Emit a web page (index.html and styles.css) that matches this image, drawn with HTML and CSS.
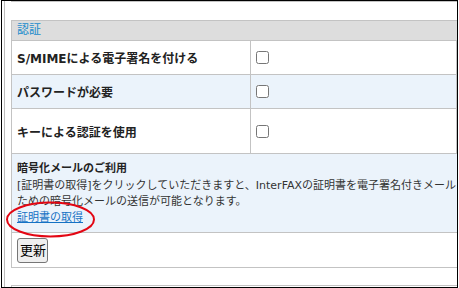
FILE: index.html
```html
<!DOCTYPE html>
<html lang="ja">
<head>
<meta charset="utf-8">
<link rel="stylesheet" href="styles.css">
</head>
<body>
<div class="frame">
  <div class="inner">
    <div class="panel-prev"></div>
    <div class="panel">
      <div class="head">認証</div>
      <div class="row">
        <div class="label">S/MIMEによる電子署名を付ける</div>
        <div class="ctrl"><input type="checkbox"></div>
        <div class="extra"></div>
      </div>
      <div class="row alt">
        <div class="label">パスワードが必要</div>
        <div class="ctrl"><input type="checkbox"></div>
        <div class="extra"></div>
      </div>
      <div class="row tall">
        <div class="label">キーによる認証を使用</div>
        <div class="ctrl"><input type="checkbox"></div>
        <div class="extra"></div>
      </div>
      <div class="info">
        <div class="info-title">暗号化メールのご利用</div>
        <div class="info-text">[証明書の取得]をクリックしていただきますと、InterFAXの証明書を電子署名付きメール<br>ための暗号化メールの送信が可能となります。</div>
        <a class="info-link" href="#">証明書の取得</a>
      </div>
      <div class="actions"><button class="btn" type="button">更新</button></div>
    </div>
    <div class="panel-next"></div>
  </div>
  <svg class="mark" width="459" height="288" viewBox="0 0 459 288">
    <ellipse cx="50.5" cy="219.5" rx="43.5" ry="17" fill="none" stroke="#e30613" stroke-width="2"/>
  </svg>
</div>
</body>
</html>
```
FILE: styles.css
```css
html, body {
  margin: 0;
  padding: 0;
  background: #fff;
}
body {
  font-family: "DejaVu Sans", "Noto Sans CJK JP", sans-serif;
}
.frame {
  position: relative;
  margin-left: 1px;
  width: 457px;
  height: 288px;
  box-sizing: border-box;
  border: 1px solid #000;
  overflow: hidden;
}
.inner {
  margin-left: 2px;
  border-left: 1px solid #bdbdbd;
  height: 100%;
  padding-left: 6px;
}
.panel-prev {
  width: 700px;
  height: 0;
  border-left: 1px solid #c3c3c3;
  border-bottom: 1px solid #c3c3c3;
}
.panel {
  margin-top: 18px;
  width: 700px;
  border: 1px solid #c3c3c3;
}
.head {
  height: 19px;
  line-height: 19px;
  padding-left: 5px;
  background: #dddddd;
  color: #1a8ccc;
  font-size: 12px;
  border-bottom: 1px solid #c3c3c3;
}
.row {
  display: flex;
  height: 33px;
  border-bottom: 1px solid #c3c3c3;
}
.row.alt {
  background: #ebf3fb;
}
.row.tall {
  height: 44px;
}
.label {
  width: 238px;
  box-sizing: border-box;
  padding-left: 5px;
  display: flex;
  align-items: center;
  font-size: 12px;
  font-weight: bold;
  color: #222;
}
.ctrl {
  width: 200px;
  border-left: 1px solid #c3c3c3;
  padding-left: 5px;
  box-sizing: content-box;
  display: flex;
  align-items: center;
}
.ctrl input {
  margin: 0;
  width: 13px;
  height: 13px;
}
.extra {
  flex: 1;
  border-left: 1px solid #c3c3c3;
}
.info {
  background: #ebf3fb;
  padding: 6px 0 6px 5px;
  border-bottom: 1px solid #c3c3c3;
  font-size: 11px;
  color: #333;
}
.info-title {
  line-height: 17px;
  margin-bottom: 1px;
  font-weight: bold;
  color: #222;
}
.info-text {
  line-height: 16px;
  white-space: nowrap;
}
.info-link {
  display: block;
  width: max-content;
  line-height: 16px;
  color: #1572c4;
  text-decoration: underline;
}
.actions {
  height: 34px;
  box-sizing: border-box;
  padding: 5px 0 0 5px;
}
.btn {
  font-family: "DejaVu Sans", "Noto Sans CJK JP", sans-serif;
  font-size: 13px;
  line-height: 19px;
  padding: 2px 1px 2px 2px;
  border: 1px solid #767676;
  border-radius: 3px;
  background: #efefef;
  color: #000;
  display: block;
}
.panel-next {
  margin-top: 17px;
  width: 700px;
  height: 10px;
  border-left: 1px solid #c3c3c3;
  border-top: 1px solid #c3c3c3;
}
.mark {
  position: absolute;
  left: -2px;
  top: -1px;
  pointer-events: none;
}
```
